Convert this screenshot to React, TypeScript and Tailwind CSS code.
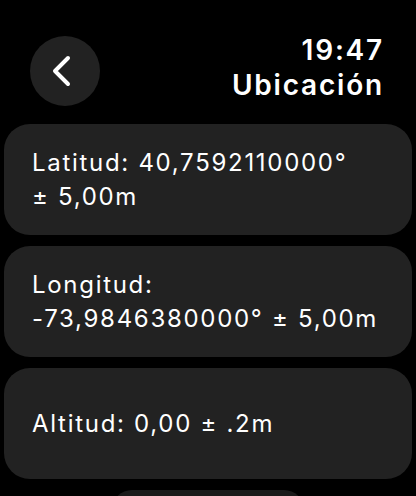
const NB = '\u00a0';

const rows = [
  { id: 'lat', text: `Latitud: 40,7592110000° ±${NB}5,00m` },
  { id: 'lon', text: `Longitud: -73,9846380000°${NB}±${NB}5,00m` },
  { id: 'alt', text: `Altitud: 0,00 ±${NB}.2m` },
];

export default function App() {
  return (
    <div
      className="w-[416px] h-[496px] overflow-hidden bg-black text-white"
      style={{ fontFamily: 'Inter, "Noto Sans", sans-serif' }}
    >
      <div className="flex items-start justify-between pl-[30px] pr-[32px] pt-[36px] h-[124px]">
        <button className="w-[70px] h-[70px] rounded-full bg-[#222222] flex items-center justify-center">
          <svg className="w-[20px] h-[32px] -ml-[6px]" viewBox="0 0 20 32" fill="none">
            <polyline
              points="16,3 3,16 16,29"
              stroke="white"
              strokeWidth="4"
              strokeLinecap="round"
              strokeLinejoin="round"
            />
          </svg>
        </button>
        <div className="flex flex-col items-end text-[28px] font-semibold leading-[35px] tracking-[1.8px] -mt-[3px]">
          <span>19:47</span>
          <span>Ubicación</span>
        </div>
      </div>

      <div className="flex flex-col gap-[11px] px-[4px]">
        {rows.map((row) => (
          <div
            key={row.id}
            className="h-[111px] rounded-[26px] bg-[#222222] flex items-center pl-[28px] pr-[20px]"
          >
            <p className="text-[24px] leading-[34px] tracking-[1.7px]">{row.text}</p>
          </div>
        ))}
        <div className="mx-auto w-[192px] h-[40px] rounded-[20px] bg-[#1a1a1a]" />
      </div>
    </div>
  );
}
